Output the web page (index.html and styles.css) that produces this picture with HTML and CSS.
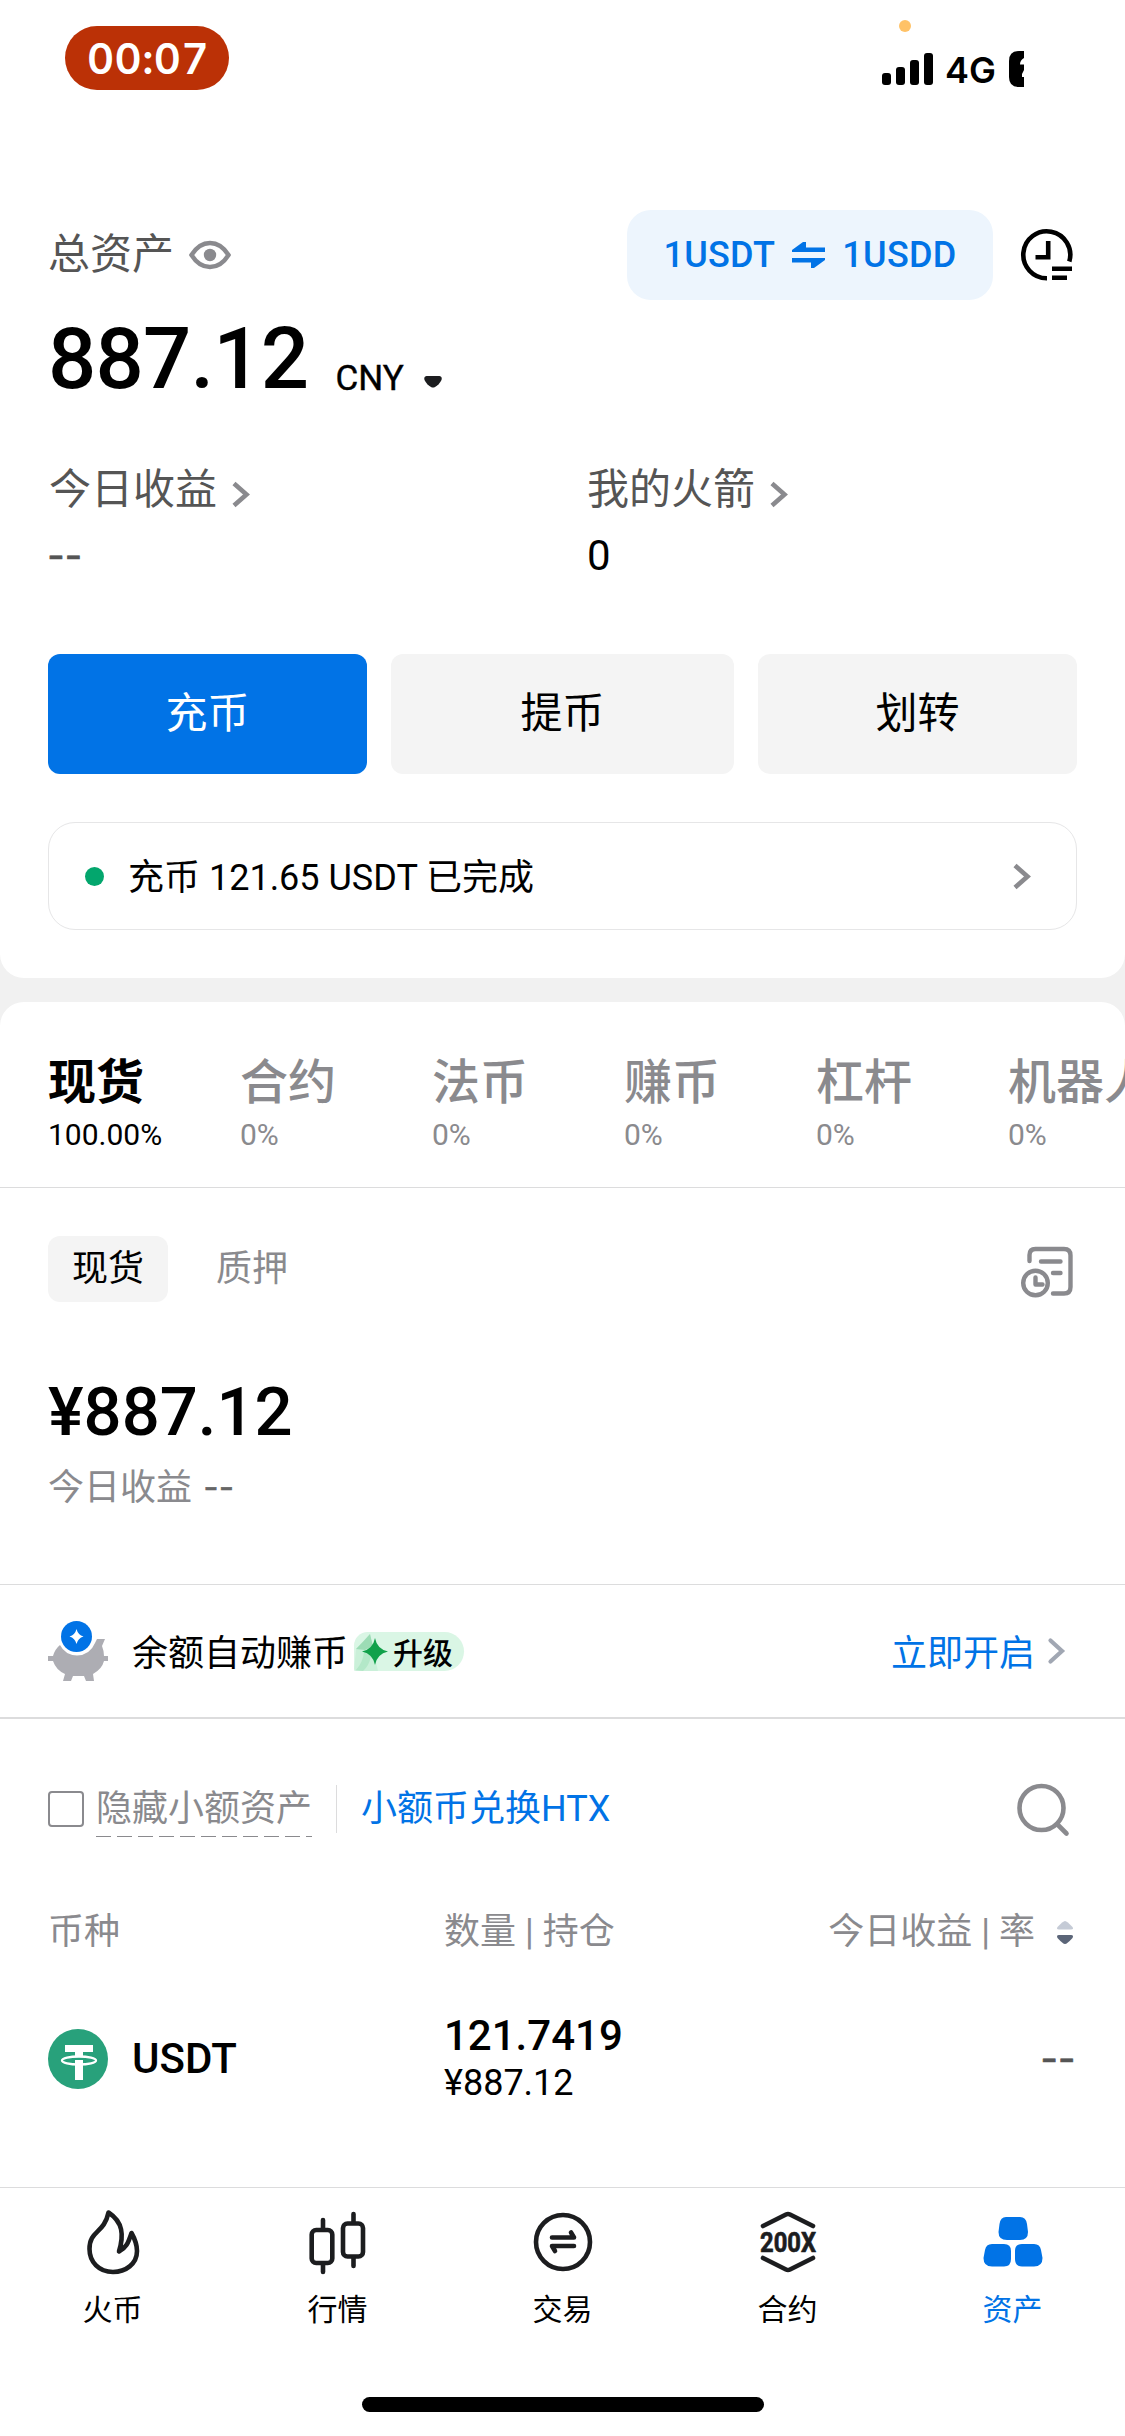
FILE: index.html
```html
<!DOCTYPE html>
<html lang="zh-CN">
<head>
<meta charset="utf-8">
<title>资产</title>
<link rel="stylesheet" href="styles.css">
</head>
<body>
<main class="screen">
  <section class="panel overview">
    <header class="status">
      <span class="clock">00:07</span>
      <div class="signal">
        <i class="mic-dot"></i>
        <svg width="51" height="32" viewBox="0 0 51 32"><rect x="0" y="20" width="9" height="12" rx="3"/><rect x="14" y="14" width="9" height="18" rx="3"/><rect x="28" y="7" width="9" height="25" rx="3"/><rect x="42" y="0" width="9" height="32" rx="3"/></svg>
        <span class="network">4G</span>
        <svg class="battery" width="15" height="36" viewBox="0 0 15 36"><path d="M15 0H10Q0 0 0 10V26Q0 36 10 36H15Z"/><path d="M15 7Q11 9 11 13.500H15ZM15 19L13 23V26H15Z" fill="#fff"/></svg>
      </div>
    </header>

    <div class="total-row">
      <span class="label">总资产</span>
      <svg class="eye" width="42" height="28" viewBox="0 0 42 28" fill="none" stroke="#8a8a8e" stroke-width="4.400"><path d="M2.500 14Q10 2 21 2T39.500 14Q32 26 21 26T2.500 14Z"/><circle cx="21" cy="14" r="6.200" fill="#8a8a8e" stroke="none"/></svg>
      <div class="convert">
        <span>1USDT</span>
        <svg width="33" height="26" viewBox="0 0 33 26" fill="#0173e6"><path d="M0 10V8L11 0H14V5.500H33V10ZM33 16V18L22 26H19V20.500H0V16Z"/></svg>
        <span>1USDD</span>
      </div>
      <svg class="history" width="52" height="52" viewBox="0 0 52 52" fill="none" stroke="#000" stroke-width="4.600"><path d="M26 49.300A23.500 23.500 0 1 1 48.300 32.500"/><path d="M27.200 12V28.200H14.500M31 39.700H51M31 48.700H46"/></svg>
    </div>
    <div class="balance">
      <strong>887.12</strong><span>CNY</span>
      <svg width="18" height="12" viewBox="0 0 18 12" fill="#1c1d1f"><path d="M2.500 0H15.500Q18.500 .500 17.500 4Q15 9 11 11Q9 12 7 11Q3 9 .500 4Q-.500 .500 2.500 0Z"/></svg>
    </div>
    <div class="stats">
      <div><div class="stat-label">今日收益<svg class="chev" width="18" height="25" viewBox="0 0 18 25"><path d="M2 1.500 14.500 12.500 2 23.500"/></svg></div><div class="stat-value muted dashes">--</div></div>
      <div><div class="stat-label">我的火箭<svg class="chev" width="18" height="25" viewBox="0 0 18 25"><path d="M2 1.500 14.500 12.500 2 23.500"/></svg></div><div class="stat-value">0</div></div>
    </div>
    <div class="actions">
      <button class="btn primary">充币</button><button class="btn">提币</button><button class="btn">划转</button>
    </div>
    <div class="notice"><i class="ok-dot"></i><span>充币 121.65 USDT 已完成</span><svg class="chev" width="18" height="25" viewBox="0 0 18 25"><path d="M2 1.500 14.500 12.500 2 23.500"/></svg></div>
  </section>

  <section class="panel account">
    <nav class="tabs">
      <div class="tab active"><b>现货</b><small>100.00%</small></div>
      <div class="tab"><b>合约</b><small>0%</small></div>
      <div class="tab"><b>法币</b><small>0%</small></div>
      <div class="tab"><b>赚币</b><small>0%</small></div>
      <div class="tab"><b>杠杆</b><small>0%</small></div>
      <div class="tab"><b>机器人</b><small>0%</small></div>
    </nav>
    <div class="subtabs">
      <span class="chip">现货</span><span class="plain">质押</span>
      <svg width="54" height="52" viewBox="0 0 54 52" fill="none" stroke="#8a8a8e" stroke-width="4.400" stroke-linecap="round" stroke-linejoin="round"><path d="M9.500 15V9Q9.500 3 15.500 3H44Q50.500 3 50.500 9.500V41Q50.500 47.500 44 47.500H33M21 15.500H40.500M33 27H40.500"/><circle cx="15.500" cy="37" r="12.300"/><path d="M15.500 31.500V38.500H22.500"/></svg>
    </div>
    <div class="spot-total">¥887.12</div>
    <div class="spot-today">今日收益 <span class="dashes">--</span></div>

    <div class="earn">
      <svg class="piggy" width="60" height="60" viewBox="0 0 60 60"><path fill="#adadb3" d="M0 35H5Q7 28 12 24Q17 34 29 34.500Q42 34 47 22L49 18H57L54 25Q56 30 56 35H60V40H56Q54 48 45 53L46 60H38L36 55H25L23 60H15L17 53Q8 49 5 40H0Z"/><circle cx="28.500" cy="15.500" r="15.500" fill="#0173e6"/><path fill="#fff" d="M28.500 8Q30 14 35.500 15.500Q30 17 28.500 23Q27 17 21.500 15.500Q27 14 28.500 8Z"/></svg>
      <span class="earn-title">余额自动赚币</span>
      <span class="badge"><svg width="39" height="39" viewBox="0 0 39 39"><path fill="#a6e2bd" d="M2 17L16 2L18 14L24 39H0Z" opacity=".3"/><path fill="#9cdcb5" d="M2 17Q10 9 16 2L19 14L11 18Z"/><path fill="#a9e4c0" d="M2 38Q9 30 10 20L17 24Q15 34 9 39Z" opacity=".7"/><path fill="#12a14b" d="M21 6Q23 17 34 19.500Q23 22 21 33Q19 22 8 19.500Q19 17 21 6Z"/></svg>升级</span>
      <span class="enable">立即开启</span>
      <svg class="enable-chev" width="17" height="26" viewBox="0 0 17 26" fill="none" stroke="#a1a7b3" stroke-width="4.200" stroke-linecap="round"><path d="M2.500 2.500 14 13 2.500 23.500"/></svg>
    </div>

    <div class="filter">
      <i class="checkbox"></i>
      <span class="hide-small">隐藏小额资产<svg width="216" height="2"><path d="M0 1H216" stroke="#8a8a8e" stroke-width="1" stroke-dasharray="15 6" shape-rendering="crispEdges"/></svg></span>
      <span class="swap">小额币兑换HTX</span>
      <svg class="search" width="54" height="54" viewBox="0 0 54 54" fill="none" stroke="#8a8a8e" stroke-width="4.600" stroke-linecap="round"><circle cx="24.500" cy="25" r="22"/><path d="M40.500 41.500 49.500 50.500"/></svg>
    </div>
    <div class="grid head">
      <span>币种</span><span>数量 | 持仓</span>
      <span class="right">今日收益 | 率<svg width="16" height="23" viewBox="0 0 16 23"><path fill="#c5cbd6" d="M8 0Q10 0 15.500 6Q17 8.500 14 8.500H2Q-1 8.500 .500 6Q6 0 8 0Z"/><path fill="#5b6578" d="M8 23Q10 23 15.500 17Q17 14 14 14H2Q-1 14 .500 17Q6 23 8 23Z"/></svg></span>
    </div>
    <div class="grid asset">
      <div class="coin"><svg width="60" height="60" viewBox="0 0 60 60"><circle cx="30" cy="30" r="30" fill="#28a17b"/><path fill="#fff" d="M17 16H45V23H35V28H27V23H17ZM27 31H35V51H27Z"/><ellipse cx="31" cy="31.500" rx="17" ry="4" fill="none" stroke="#fff" stroke-width="2.300"/></svg><span>USDT</span></div>
      <div class="holding"><b>121.7419</b><span>¥887.12</span></div>
      <span class="profit dashes">--</span>
    </div>
  </section>

  <nav class="tabbar">
    <div class="items">
      <div class="item"><svg width="66" height="66" viewBox="0 0 66 66"><path d="M28.500 4.500C43 14 44 27 39 43.500C47 39 48 35 51.500 25C56 33 57 38 57 43C57 56 45.500 64 33 64C19 64 9.500 54 9.500 41C9.500 22 24 26 28.500 4.500Z"/></svg><span>火币</span></div>
      <div class="item"><svg width="66" height="66" viewBox="0 0 66 66"><rect x="6.700" y="22" width="20.600" height="33" rx="4.500"/><rect x="38" y="15.500" width="20" height="33" rx="4.500"/><path d="M18 12V21M18 56V64M48.500 6V14M48.500 50V58"/></svg><span>行情</span></div>
      <div class="item"><svg width="66" height="66" viewBox="0 0 66 66"><circle cx="33" cy="34" r="27"/><path d="M22 29.500H44L41 24.500M44 38H22L25 43"/></svg><span>交易</span></div>
      <div class="item"><svg width="66" height="66" viewBox="0 0 66 66"><path d="M8 18 31 6.500Q33 5.500 35 6.500L58 18M8 50 31 61.500Q33 62.500 35 61.500L58 50"/><text x="5" y="43.500" textLength="56" lengthAdjust="spacingAndGlyphs">200X</text></svg><span>合约</span></div>
      <div class="item current"><svg width="66" height="66" viewBox="0 0 66 66"><path d="M26 9H40Q46 9 47 16L48 24Q48 32 40 32H27Q18.500 32 18.500 24L19.500 16Q20.500 9 26 9ZM12 36H24Q31 36 31 43V51Q31 58.500 24 58.500H12Q3.500 58.500 3.500 50L5 42Q6 36 12 36ZM42 36H54Q60 36 61 42L62.500 50Q62.500 58.500 54 58.500H42Q35 58.500 35 51V43Q35 36 42 36Z"/></svg><span>资产</span></div>
    </div>
    <div class="home-indicator"></div>
  </nav>
</main>
</body>
</html>
```
FILE: styles.css
```css
* { box-sizing: border-box; }
body {
  margin: 0;
  background: #f1f1f1;
  color: #000;
  font-family: Roboto, "Noto Sans CJK SC", sans-serif;
}
svg { display: block; flex: none; overflow: visible; }
.screen {
  display: flex;
  flex-direction: column;
  width: 1125px;
  height: 2436px;
  overflow: hidden;
}
.panel { background: #fff; }

/* Overview */
.overview {
  height: 978px;
  padding: 0 48px;
  border-radius: 0 0 24px 24px;
}
.status {
  display: flex;
  justify-content: space-between;
  height: 210px;
  padding: 26px 53px 0 17px;
}
.clock {
  width: 164px;
  height: 64px;
  padding-left: 2px;
  border-radius: 32px;
  background: #bb3106;
  color: #fff;
  font: 600 42px/66px Inter, sans-serif;
  text-align: center;
  letter-spacing: .4px;
  font-variant-numeric: tabular-nums;
}
.signal {
  position: relative;
  display: flex;
  align-items: flex-start;
  width: 142px;
  padding-top: 27px;
}
.network {
  width: 64px;
  margin: -3px 0 0 12px;
  font: 600 36px/40px Inter, sans-serif;
}
.battery { margin-top: -2px; }
.mic-dot {
  position: absolute;
  left: 17px;
  top: -6px;
  width: 12px;
  height: 12px;
  border-radius: 50%;
  background: #ffc267;
}
.total-row { display: flex; align-items: center; height: 90px; }
.label { font-size: 42px; line-height: 60px; color: #555; }
.eye { margin-left: 15px; }
.convert {
  display: flex;
  align-items: center;
  justify-content: center;
  gap: 17px;
  width: 366px;
  height: 90px;
  margin-left: auto;
  padding-bottom: 1px;
  border-radius: 24px;
  background: #edf5fd;
  color: #0173e6;
  font-size: 36px;
  font-weight: 500;
  letter-spacing: .3px;
}
.history { margin: 0 4px 0 28px; }
.balance {
  display: flex;
  align-items: baseline;
  height: 84px;
  margin-top: 17px;
  line-height: 84px;
}
.balance strong { font-size: 85px; font-weight: 500; letter-spacing: -.8px; }
.balance span { margin: 2px 0 0 27px; font-size: 35px; line-height: 40px; -webkit-text-stroke: .4px; }
.balance span { position: relative; top: 2px; }
.balance svg { margin: 0 0 6px 20px; }
.stats {
  display: grid;
  grid-template-columns: 538px 1fr;
  height: 134px;
  margin-top: 59px;
  padding-left: 1px;
}
.stat-label {
  display: flex;
  align-items: center;
  gap: 15px;
  color: #555;
  font-size: 42px;
  line-height: 60px;
}
.chev { fill: none; stroke: #8a8a8e; stroke-width: 4.6; }
.stat-label .chev { margin-top: 9px; }
.stat-value { margin-top: 11px; font-size: 42px; line-height: 50px; }
.muted { color: #555; }
/* Placeholder for missing values: wider, heavier hyphens */
.dashes { display: inline-block; transform: scaleX(1.2); transform-origin: left; letter-spacing: 3px; -webkit-text-stroke: .6px; }
.actions {
  display: grid;
  grid-template-columns: 319px 343px 319px;
  gap: 24px;
  height: 120px;
  margin-top: 60px;
}
.btn {
  padding: 0;
  border: 0;
  border-radius: 12px;
  background: #f4f4f4;
  color: #000;
  font: 400 42px/60px Roboto, "Noto Sans CJK SC", sans-serif;
}
.primary { background: #0173e6; color: #fff; }
.notice {
  display: flex;
  align-items: center;
  height: 108px;
  margin-top: 48px;
  padding: 0 45px 0 36px;
  border: 1px solid #e6e6e7;
  border-radius: 27px;
  font-size: 36px;
}
.notice span { padding-bottom: 5px; }
.notice .chev { margin-left: auto; }
.ok-dot { width: 19px; height: 19px; margin-right: 24px; border-radius: 50%; background: #03a66d; }

/* Account */
.account {
  height: 1185px;
  flex: none;
  margin-top: 24px;
  border-radius: 24px 24px 0 0;
}
.tabs {
  display: flex;
  height: 186px;
  padding: 51px 0 0 48px;
  border-bottom: 1px solid #dcdcdd;
  overflow: hidden;
}
.tab { flex: 0 0 192px; color: #8a8a8e; white-space: nowrap; }
.tab b { display: block; font-size: 48px; font-weight: 500; line-height: 60px; }
.tab small { display: block; margin-top: 4px; font-size: 30px; line-height: 36px; }
.tab.active { color: #000; }
.tab.active b { font-weight: 700; }
.subtabs {
  display: flex;
  align-items: center;
  height: 66px;
  margin-top: 48px;
  padding: 0 51px 0 48px;
  font-size: 36px;
}
.chip { width: 120px; border-radius: 12px; background: #f4f4f4; text-align: center; line-height: 66px; }
.plain { margin-left: 48px; color: #8a8a8e; line-height: 66px; }
.subtabs svg { margin: 5px 0 0 auto; }
.spot-total { margin: 75px 0 0 48px; font-size: 67px; font-weight: 500; line-height: 70px; }
.spot-today { margin: 19px 0 0 48px; color: #8a8a8e; font-size: 36px; line-height: 44px; }
.spot-today span { margin-left: 4px; color: #666; }
.earn {
  display: flex;
  align-items: center;
  height: 135px;
  margin-top: 74px;
  padding: 0 60px 0 48px;
  border-top: 1px solid #dcdcdd;
  border-bottom: 2px solid #dcdcdd;
  font-size: 36px;
}
.earn-title { margin-left: 24px; padding-bottom: 3px; }
.badge {
  display: flex;
  align-items: center;
  width: 110px;
  height: 39px;
  margin-left: 6px;
  border-radius: 14px 20px 20px 3px;
  background: #daf6e5;
  font-size: 30px;
  font-weight: 500;
  white-space: nowrap;
}
.enable { margin-left: auto; padding-bottom: 3px; color: #0173e6; }
.enable-chev { margin-left: 13px; }
.filter {
  display: flex;
  align-items: center;
  height: 48px;
  margin-top: 66px;
  padding: 0 54px 0 48px;
  font-size: 36px;
  line-height: 48px;
}
.checkbox { width: 36px; height: 36px; border: 2px solid #8a8a8e; border-radius: 4px; }
.hide-small { position: relative; width: 216px; margin-left: 12px; color: #8a8a8e; white-space: nowrap; }
.hide-small svg { position: absolute; left: 0; top: 50px; }
.swap { margin-left: 24px; padding-left: 24px; border-left: 1px solid #dcdcdd; color: #0173e6; }
.search { margin: 2px 0 0 auto; }
.grid { display: grid; grid-template-columns: 396px 1fr auto; padding: 0 51px 0 48px; }
.head { margin-top: 77px; color: #8a8a8e; font-size: 36px; line-height: 44px; }
.head .right { display: flex; align-items: center; gap: 22px; margin-right: 1px; }
.asset { height: 92px; margin-top: 58px; align-items: center; }
.coin { display: flex; align-items: center; gap: 24px; font-size: 42px; font-weight: 500; }
.coin span { padding-bottom: 2px; }
.holding b { display: block; font-size: 42px; font-weight: 500; line-height: 48px; }
.holding span { display: block; font-size: 36px; line-height: 46px; }
.profit { padding-bottom: 2px; color: #555; font-size: 42px; }
.profit.dashes { transform-origin: right; margin-right: -3px; }

/* Bottom navigation */
.tabbar { flex: none; height: 249px; border-top: 1px solid #dcdcdd; background: #fff; }
.items { display: grid; grid-template-columns: repeat(5, 1fr); height: 209px; padding-top: 20px; }
.item { display: flex; flex-direction: column; align-items: center; font-size: 30px; }
.item span { margin-top: 16px; line-height: 40px; }
.item svg { fill: none; stroke: #1c1d1f; stroke-width: 4.6; stroke-linecap: round; stroke-linejoin: round; }
.item text { fill: #1c1d1f; stroke: #1c1d1f; stroke-width: .7; font: 700 28px Roboto, sans-serif; }
.item.current { color: #0173e6; }
.item.current svg { fill: #0173e6; stroke: none; }
.home-indicator { width: 402px; height: 15px; margin: 0 auto; border-radius: 8px; background: #000; }
```
